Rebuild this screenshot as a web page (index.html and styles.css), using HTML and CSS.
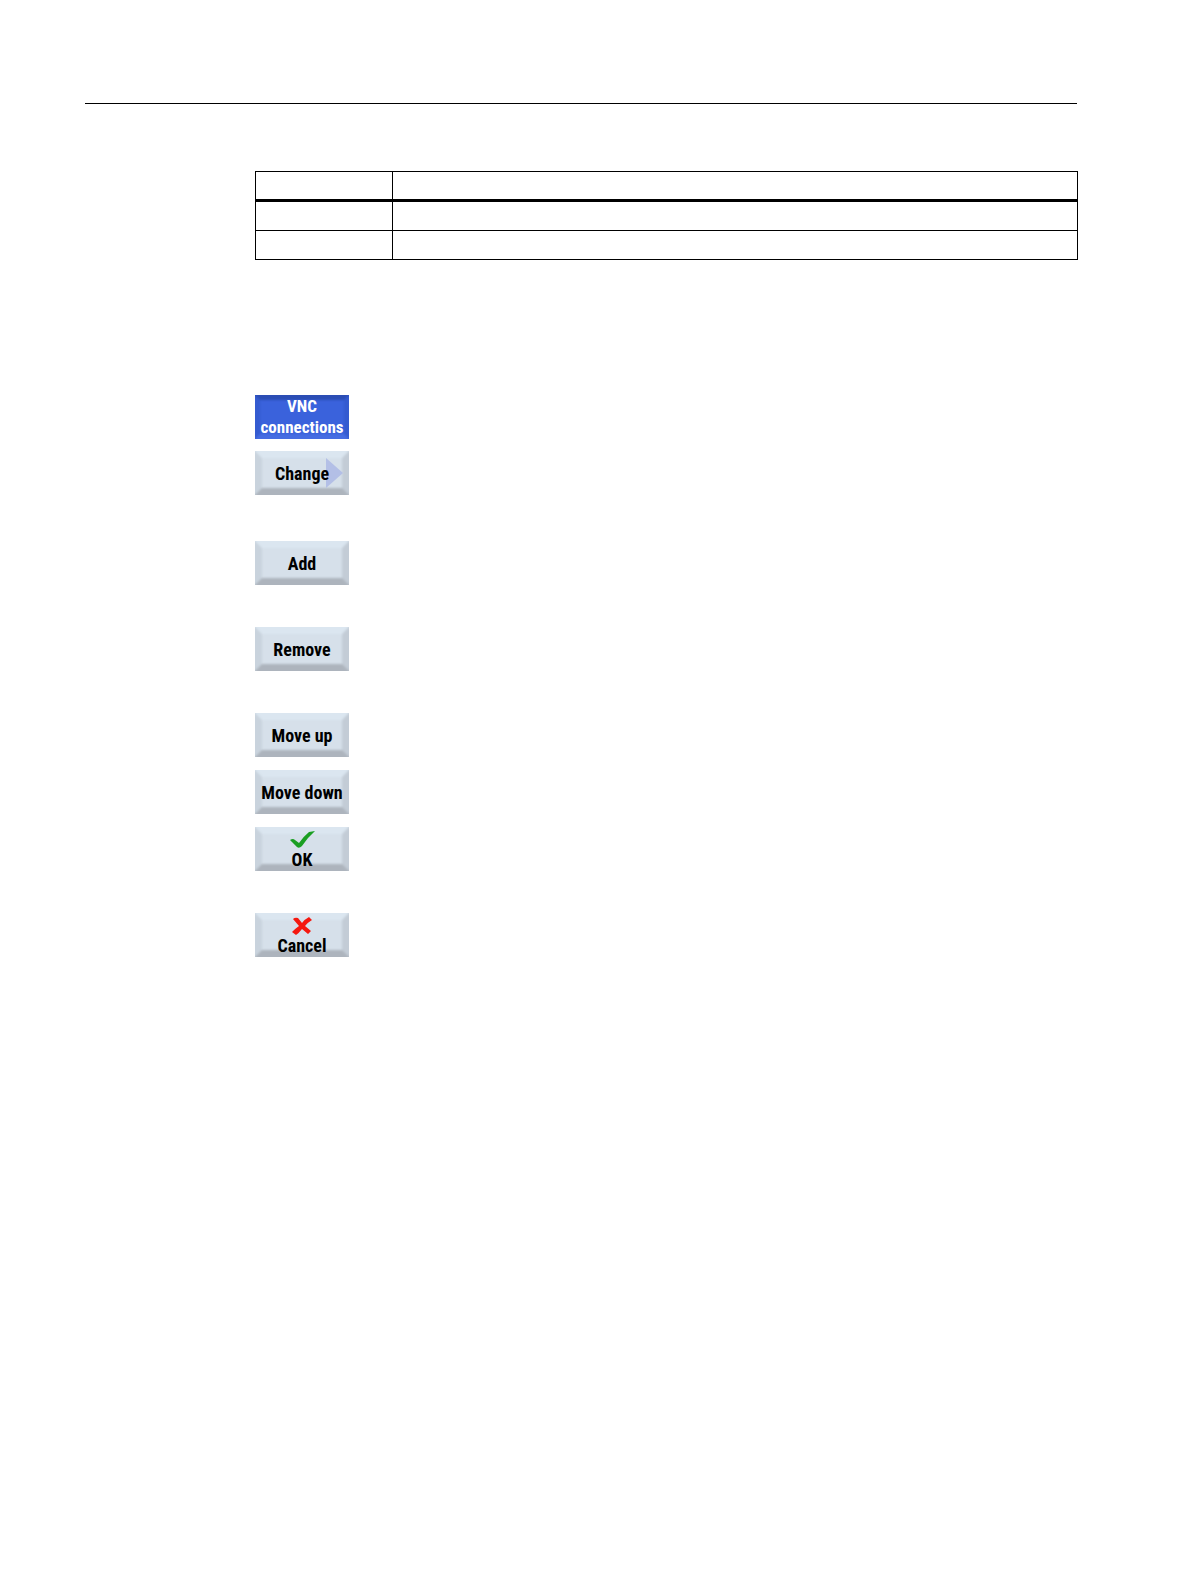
FILE: index.html
```html
<!DOCTYPE html>
<html lang="en">
<head>
  <meta charset="utf-8">
  <title>VNC connections</title>
  <link rel="stylesheet" href="styles.css">
</head>
<body>
<hr class="rule">

<div class="content">

<table class="grid">
  <thead>
    <tr><th></th><th></th></tr>
  </thead>
  <tbody>
    <tr><td></td><td></td></tr>
    <tr><td></td><td></td></tr>
  </tbody>
</table>

<!-- softkeys -->
<div class="keys">
  <button type="button" class="key active">VNC<br>connections</button>
  <button type="button" class="key change">Change
    <svg class="arrow" width="17" height="32" viewBox="0 0 17 32" aria-hidden="true"><path d="M0 1 L17 16 L0 31 Z" fill="#b3bfe6"/></svg>
  </button>
  <button type="button" class="key far">Add</button>
  <button type="button" class="key">Remove</button>
  <button type="button" class="key">Move up</button>
  <button type="button" class="key near">Move down</button>
  <button type="button" class="key near icon">
    <svg width="26" height="18" viewBox="0 0 26 18" aria-hidden="true"><path d="M1 9 Q4 7 6 9 L10 12 Q15 5 20 1 L26 0 Q18 7 13 15 Q10 18 8 16 Z" fill="#1a9f22"/></svg>
    OK
  </button>
  <button type="button" class="key icon">
    <svg width="20" height="18" viewBox="0 0 20 18" aria-hidden="true"><path d="M1 2 Q3 0 6 1 L10 6 Q13 2 17 0 L20 3 Q15 6 13 9 L19 14 L16 17 L10 12 Q7 16 4 18 L0 15 Q4 11 7 9 Z" fill="#f5180f"/></svg>
    Cancel
  </button>
</div>

</div>
</body>
</html>
```

FILE: styles.css
```css
body { margin: 0; padding: 103px 113px 0 85px; background: #fff; color: #000; }

.rule { margin: 0 1px 0 0; border: none; height: 1px; background: #000; }
.content { margin-left: 170px; padding-top: 67px; }

.grid { width: 100%; border-collapse: collapse; table-layout: fixed; }
.grid th, .grid td { height: 28px; padding: 0; border: 1px solid #000; }
.grid th { height: 27px; border-bottom-width: 3px; }
.grid th:first-child { width: 136px; }

.keys { display: flex; flex-direction: column; align-items: flex-start; padding-top: 135px; }

.key {
  position: relative;
  isolation: isolate;
  overflow: hidden;
  display: flex;
  flex-direction: column;
  align-items: center;
  justify-content: center;
  width: 94px;
  height: 44px;
  margin: 42px 0 0;
  padding: 0;
  border: none;
  background: #d6e0ea;
  color: #000;
  font: bold 18px/21px "Roboto Condensed", Roboto, sans-serif;
  white-space: nowrap;
}
/* bevel, drawn past the edges so that only its inner side is soft */
.key::before {
  content: "";
  position: absolute;
  inset: -4px;
  z-index: -2;
  border: 11px solid;
  border-color: #dbe6f0 #c3ccd6 #adb4bd #c9d3dd;
  filter: blur(1px);
}
.near { margin-top: 13px; }
.change { margin-top: 12px; }
.far { margin-top: 46px; }

.active { display: block; margin-top: 0; background: #3a62dc; color: #fff; text-align: center; font-size: 17px; }
.active::before { border-width: 9px; border-color: #2b4db4 #345bd0 #466de2 #345bd0; }

.arrow { position: absolute; right: 6px; top: 6px; z-index: -1; }
.icon { justify-content: flex-start; padding: 4px 0 0; }
.icon svg { flex: none; }
```
